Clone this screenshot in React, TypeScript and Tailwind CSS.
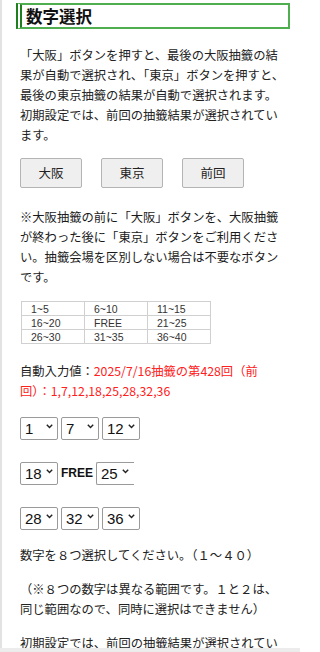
import React from "react";

const jp = "font-['Noto_Sans_CJK_JP','Noto_Sans',sans-serif]";

function Chevron() {
  return (
    <svg width="7" height="5" viewBox="0 0 7 5" className="absolute right-[5px] top-[9px] pointer-events-none">
      <path d="M0.8 0.8 L3.5 3.6 L6.2 0.8" fill="none" stroke="#222" strokeWidth="1.4" />
    </svg>
  );
}

function NumSelect({ value, cut }: { value: string; cut?: boolean }) {
  return (
    <div className="relative">
      <select
        defaultValue={value}
        className={`appearance-none w-[38px] h-[23px] pl-[4px] bg-white text-[15px] leading-[21px] text-[#111] font-['Liberation_Sans',Arial,sans-serif] rounded-[2px] border border-[#9a9a9a] ${cut ? "border-r-0 rounded-r-none" : ""}`}
      >
        <option>{value}</option>
      </select>
      <Chevron />
    </div>
  );
}

const ranges = [
  ["1~5", "6~10", "11~15"],
  ["16~20", "FREE", "21~25"],
  ["26~30", "31~35", "36~40"],
];

export default function App() {
  return (
    <div className={`w-[300px] h-[652px] flex flex-col bg-white text-[#222] ${jp}`}>
      <div className="h-[648px] overflow-hidden border-l-2 border-[#e2e2e2]">
        <h2 className="mt-[3px] ml-[14px] w-[274px] h-[26px] flex items-center pl-[4px] border-2 border-[#4fae4f] border-l-[6px] [border-left-style:double] border-l-[#1f7f1f] text-[16.5px] font-bold text-[#111] leading-none">
          数字選択
        </h2>

        <p className="mt-[16px] pl-[18px] text-[12.3px] leading-[20px] whitespace-nowrap">
          「大阪」ボタンを押すと、最後の大阪抽籤の結<br />
          果が自動で選択され、「東京」ボタンを押すと、<br />
          最後の東京抽籤の結果が自動で選択されます。<br />
          初期設定では、前回の抽籤結果が選択されてい<br />
          ます。
        </p>

        <div className="mt-[13px] pl-[18px] flex gap-[19px]">
          {["大阪", "東京", "前回"].map((b) => (
            <button
              key={b}
              className="w-[62px] h-[30px] bg-[#efefef] border border-[#b4b4b4] rounded-[2px] text-[12.5px] text-[#222]"
            >
              {b}
            </button>
          ))}
        </div>

        <p className="mt-[19px] pl-[18px] text-[12.3px] leading-[20px] whitespace-nowrap text-[#1a1a1a]">
          ※大阪抽籤の前に「大阪」ボタンを、大阪抽籤<br />
          が終わった後に「東京」ボタンをご利用くださ<br />
          い。抽籤会場を区別しない場合は不要なボタン<br />
          です。
        </p>

        <table className="mt-[14px] ml-[19px] border-collapse font-['Liberation_Sans',Arial,sans-serif] text-[10.5px] text-[#333]">
          <tbody>
            {ranges.map((row, i) => (
              <tr key={i}>
                {row.map((c) => (
                  <td key={c} className="w-[63px] h-[14px] p-0 pl-[9px] leading-[12px] border border-[#d0d0d0]">
                    {c}
                  </td>
                ))}
              </tr>
            ))}
          </tbody>
        </table>

        <p className="mt-[17px] pl-[18px] text-[12.3px] leading-[20px] whitespace-nowrap">
          自動入力値：<span className="text-[#ff2020]">2025/7/16抽籤の第428回（前</span>
          <br />
          <span className="text-[#ff2020]">回）：1,7,12,18,25,28,32,36</span>
        </p>

        <div className="mt-[14px] pl-[18px] flex flex-col gap-[20px]">
          <div className="flex gap-[3px]">
            <NumSelect value="1" />
            <NumSelect value="7" />
            <NumSelect value="12" />
          </div>
          <div className="flex items-center gap-[3px]">
            <NumSelect value="18" />
            <span className="text-[12px] font-bold text-[#111] font-['Liberation_Sans',Arial,sans-serif]">FREE</span>
            <NumSelect value="25" cut />
          </div>
          <div className="flex gap-[3px]">
            <NumSelect value="28" />
            <NumSelect value="32" />
            <NumSelect value="36" />
          </div>
        </div>

        <p className="mt-[15px] pl-[18px] text-[12.3px] leading-[20px] whitespace-nowrap">
          数字を８つ選択してください。（１～４０）
        </p>
        <p className="mt-[14px] pl-[18px] text-[12.3px] leading-[20px] whitespace-nowrap">
          （※８つの数字は異なる範囲です。１と２は、<br />
          同じ範囲なので、同時に選択はできません）
        </p>
        <p className="mt-[14px] pl-[18px] text-[12.3px] leading-[20px] whitespace-nowrap">
          初期設定では、前回の抽籤結果が選択されてい
        </p>
      </div>
      <div className="h-[4px] bg-[#ececec]" />
    </div>
  );
}
